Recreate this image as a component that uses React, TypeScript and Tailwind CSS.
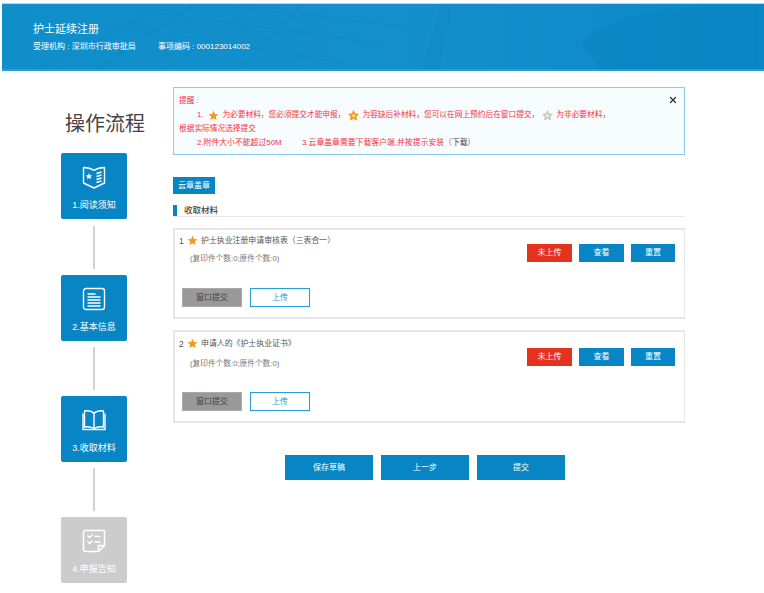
import React from 'react';
import { X } from 'lucide-react';

const FONT = "font-['Liberation_Sans','Noto_Sans_CJK_SC',sans-serif]";

const Star = ({ color = '#f29a1f', className = 'w-[11px] h-[11px]' }: { color?: string; className?: string }) => (
  <svg viewBox="0 0 24 24" className={`inline-block shrink-0 ${className}`}>
    <path fill={color} d="M12 1.5l3.2 7 7.6.8-5.7 5.1 1.6 7.6L12 18.1 5.3 22l1.6-7.6L1.2 9.3l7.6-.8z" />
  </svg>
);

const FlowerStar = ({ color = '#f29a1f' }: { color?: string }) => (
  <svg viewBox="0 0 24 24" className="inline-block shrink-0 w-[11px] h-[11px]">
    <path fill={color} d="M12 1.5l3.2 7 7.6.8-5.7 5.1 1.6 7.6L12 18.1 5.3 22l1.6-7.6L1.2 9.3l7.6-.8z" stroke={color} strokeWidth="2" strokeLinejoin="round" />
    <circle cx="12" cy="12.5" r="2.8" fill="#f7fcff" />
  </svg>
);

const BookmarkIcon = () => (
  <svg viewBox="0 0 24 24" className="w-6 h-6" fill="none" stroke="#fff" strokeWidth="1.4">
    <path d="M1.5 2.5c3.5 0 7.5.8 10.5 2.8 3-2 7-2.8 10.5-2.8v15.5L12 23 1.5 18z" strokeLinejoin="round" />
    <path d="M14.5 8.5l5-1.5M14.5 11.5l5-1.5M14.5 14.5l5-1.5M14.5 17.5l5-1.5" />
    <path fill="#fff" stroke="none" d="M7 8l1 2.2 2.300.2-1.800 1.500.600 2.300L7 13l-2.100 1.200.600-2.300-1.800-1.500 2.300-.2z" />
  </svg>
);

const DocIcon = () => (
  <svg viewBox="0 0 24 24" className="w-6 h-6" fill="none" stroke="#fff">
    <rect x="1.500" y="1.500" width="21" height="21" rx="2.500" strokeWidth="1.400" />
    <path strokeWidth="1.600" d="M5.500 7h8M5.500 10h13M5.500 13h13M5.500 16h13M5.500 19h13" />
  </svg>
);

const BookIcon = () => (
  <svg viewBox="0 0 24 24" className="w-6 h-6" fill="none" stroke="#fff" strokeWidth="1.400">
    <path d="M12 5.500C9.500 3 6 2.500 2.500 3v16c3.500-.5 7 0 9.500 1.500 2.500-1.500 6-2 9.500-1.500V3C18 2.500 14.500 3 12 5.500zM12 5.500v15" strokeLinejoin="round" />
    <path d="M1 5.500v16h22v-16" />
  </svg>
);

const CheckListIcon = () => (
  <svg viewBox="0 0 24 24" className="w-6 h-6" fill="none" stroke="#fff" strokeWidth="1.500">
    <path d="M3.500 1.500h19v15l-6 6h-13a2 2 0 0 1-2-2v-17a2 2 0 0 1 2-2z" strokeLinejoin="round" />
    <path d="M16.500 22.500v-6h6" />
    <path d="M5.500 6.500l2 2 3-3M5.500 12.500l2 2 3-3M12.500 7.500h6M12.500 13h6" />
  </svg>
);

const STEPS = [
  { label: '1.阅读须知', icon: <BookmarkIcon />, on: true, gap: 'h-[56px]' },
  { label: '2.基本信息', icon: <DocIcon />, on: true, gap: 'h-[55px]' },
  { label: '3.收取材料', icon: <BookIcon />, on: true, gap: 'h-[55px]' },
  { label: '4.申报告知', icon: <CheckListIcon />, on: false, gap: '' },
];

type CardProps = { no: number; title: string; height: string; titleTop: string; copyTop: string; btnTop: string };

const Card = ({ no, title, height, titleTop, copyTop, btnTop }: CardProps) => (
  <div className={`${height} border-2 border-r border-[#e6e6e6] bg-white flex justify-between pl-[4px] pr-[9px]`}>
    <div className="flex flex-col">
      <div className={`flex items-center ${titleTop} text-[7.9px] leading-[12px] text-[#555]`}>
        <span className="w-[8px] text-[8.5px]">{no}</span>
        <Star className="w-[11px] h-[11px] mr-[3px] -mt-[1px]" />
        <span>{title}</span>
      </div>
      <div className={`${copyTop} ml-[11px] text-[7.7px] leading-[12px] text-[#777]`}>(复印件个数:0;原件个数:0)</div>
      <div className="mt-auto mb-[10px] ml-[3px] flex gap-[8px] text-[8px]">
        <div className="w-[60px] h-[19px] bg-[#999999] border border-[#aaa] text-[#444] flex items-center justify-center">窗口提交</div>
        <div className="w-[60px] h-[19px] bg-white border border-[#2a9ad6] text-[#2a8cc4] flex items-center justify-center">上传</div>
      </div>
    </div>
    <div className={`flex gap-[7px] ${btnTop} text-white text-[8px]`}>
      <div className="w-[45px] h-[18px] bg-[#e5321f] flex items-center justify-center">未上传</div>
      <div className="w-[45px] h-[18px] bg-[#0785c4] flex items-center justify-center">查看</div>
      <div className="w-[44px] h-[18px] bg-[#0785c4] flex items-center justify-center">重置</div>
    </div>
  </div>
);

export default function App() {
  return (
    <div className={`w-[764px] h-[593px] overflow-hidden bg-white ${FONT}`}>
      {/* Header */}
      <div className="ml-[2px] mt-[3px] h-[68px] border-t border-[#d0d0d0] border-b-2 border-b-[#2f9ad2] bg-gradient-to-r from-[#0f8eca] via-[#1490cc] to-[#0a88c6] relative overflow-hidden">
        <svg viewBox="0 0 762 66" className="absolute inset-0 w-full h-full">
          <g fill="none" stroke="#0a7fb8" strokeOpacity="0.14" strokeWidth="2">
            <path d="M30 66L150 8M90 66L190 0M160 66L250 4M235 66L300 0" />
            <path d="M100 20L340 60M130 6L380 40M200 0L400 22" />
          </g>
          <path d="M420 66L440 0h12L438 66z" fill="#0a7fb8" fillOpacity="0.15" />
          <path d="M585 45c-6-8 25-28 55-34 30-6 60-10 122-8v63H600c-4-10-6-16-15-21z" fill="#0881bf" fillOpacity="0.4" />
        </svg>
        <div className="relative pl-[31px] pt-[17px] text-white">
          <div className="text-[11px] leading-[16px]">护士延续注册</div>
          <div className="mt-[4px] flex text-[8px] leading-[12px]">
            <span className="w-[125px]">受理机构 : 深圳市行政审批局</span>
            <span>事项编码 : 000123014002</span>
          </div>
        </div>
      </div>

      <div className="flex">
        {/* Flow steps */}
        <div className="w-[173px] pl-[61px] shrink-0">
          <div className="mt-[40px] h-[32px] w-[90px] ml-[4px] text-[20px] leading-[26px] text-[#444] whitespace-nowrap">操作流程</div>
          <div className="mt-[10px] flex flex-col w-[66px]">
            {STEPS.map((s, i) => (
              <React.Fragment key={s.label}>
                <div className={`h-[66px] rounded-[2px] flex flex-col items-center pt-[12px] text-white text-[9px] ${s.on ? 'bg-[#0785c4]' : 'bg-[#cccccc]'}`}>
                  {s.icon}
                  <div className="mt-[10px] leading-[12px]">{s.label}</div>
                </div>
                {i < 3 && (
                  <div className={`${s.gap} flex items-center justify-center`}>
                    <div className="w-[2px] h-[43px] bg-[#d2d2d2]" />
                  </div>
                )}
              </React.Fragment>
            ))}
          </div>
        </div>

        {/* Main */}
        <div className="w-[512px] pt-[16px]">
          <div className="relative h-[68px] border border-[#8ccbf0] bg-[#f7fcff] pl-[5px] pt-[6px] text-[7.7px] leading-[14px] text-[#f5333f]">
            <X className="absolute right-[6px] top-[7px] w-[10px] h-[10px] text-[#333]" strokeWidth={3} />
            <div>提醒 :</div>
            <div className="pl-[18px] flex items-center gap-[3px]">
              <span className="mr-[2px]">1.</span>
              <Star />
              <span>为必要材料，您必须提交才能申报，</span>
              <FlowerStar />
              <span>为容缺后补材料，您可以在网上预约后在窗口提交，</span>
              <FlowerStar color="#c9c9c9" />
              <span>为非必要材料，</span>
            </div>
            <div>根据实际情况选择提交</div>
            <div className="pl-[18px] flex text-[7.85px]">
              <span className="w-[105px]">2.附件大小不能超过50M</span>
              <span>3.云章盖章需要下载客户端,并按提示安装（<span className="text-[#444]">下载</span>）</span>
            </div>
          </div>

          <div className="mt-[22px] w-[42px] h-[17px] bg-[#0785c4] text-white text-[8px] flex items-center justify-center">云章盖章</div>

          <div className="mt-[11px] h-[12px] border-b border-[#e6e6e6] flex">
            <div className="w-[4px] h-[11px] bg-[#0785c4]" />
            <div className="ml-[7px] text-[8.5px] leading-[11px] font-medium text-[#444]">收取材料</div>
          </div>

          <div className="mt-[11px] flex flex-col gap-[11px]">
            <Card no={1} title="护士执业注册申请审核表（三表合一）" height="h-[91px]" titleTop="mt-[5px]" copyTop="mt-[6px]" btnTop="mt-[14px]" />
            <Card no={2} title="申请人的《护士执业证书》" height="h-[93px]" titleTop="mt-[6px]" copyTop="mt-[8px]" btnTop="mt-[16px]" />
          </div>

          <div className="mt-[32px] ml-[112px] flex gap-[8px] text-white text-[8px]">
            <div className="w-[88px] h-[25px] bg-[#0785c4] flex items-center justify-center">保存草稿</div>
            <div className="w-[88px] h-[25px] bg-[#0785c4] flex items-center justify-center">上一步</div>
            <div className="w-[88px] h-[25px] bg-[#0785c4] flex items-center justify-center">提交</div>
          </div>
        </div>
      </div>
    </div>
  );
}
